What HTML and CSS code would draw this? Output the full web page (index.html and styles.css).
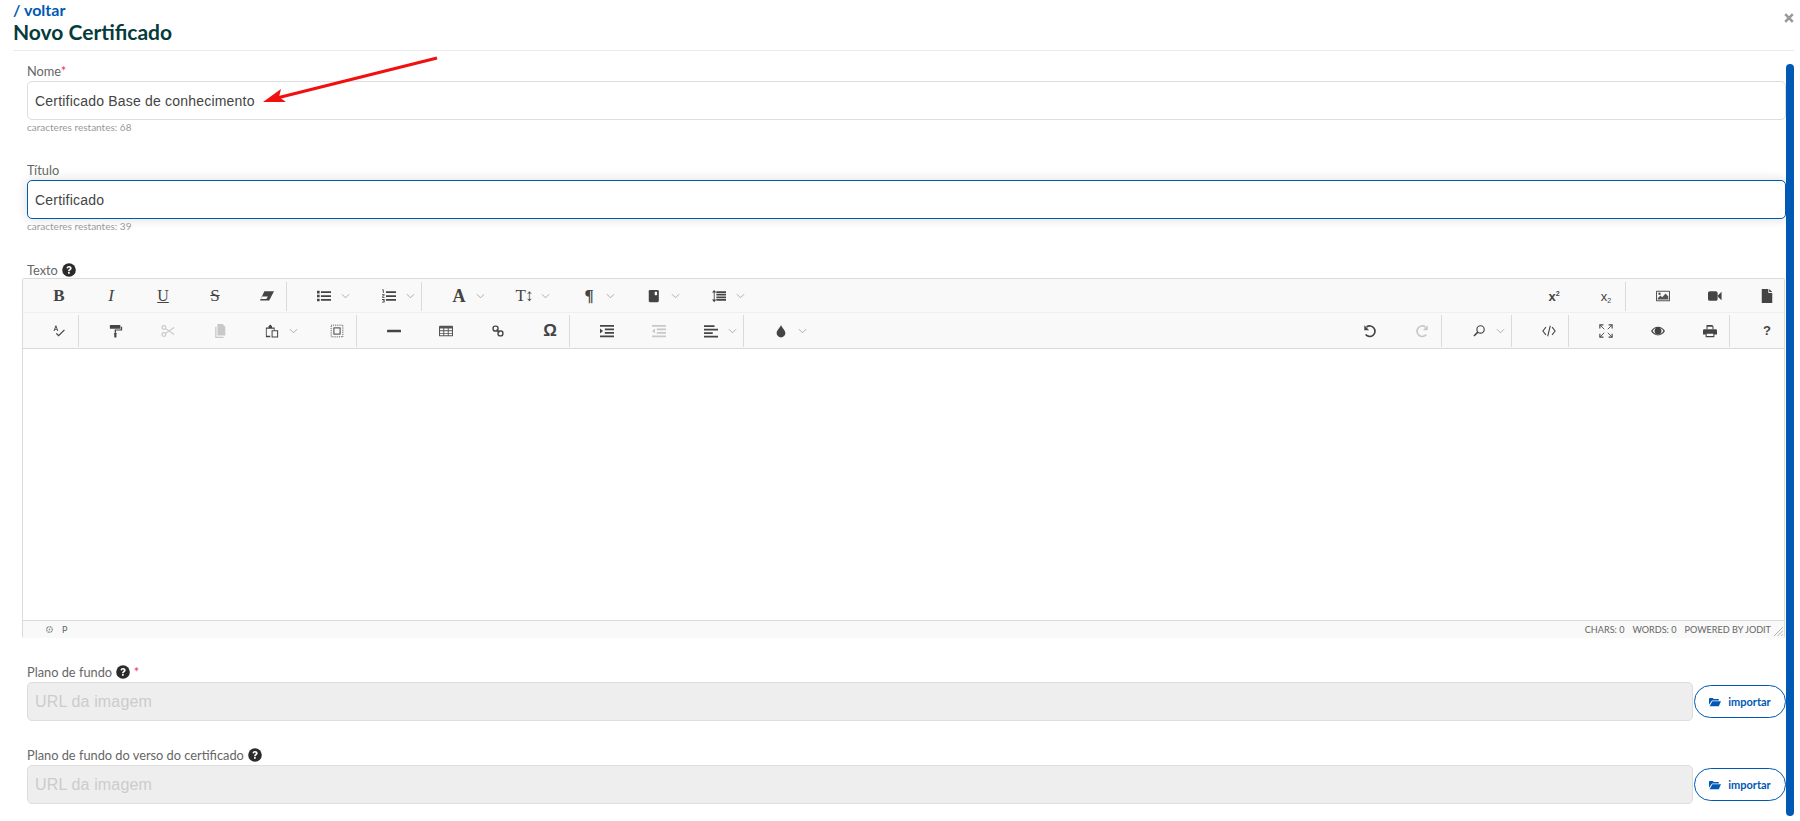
FILE: index.html

```html
<!DOCTYPE html>
<html lang="pt-BR">
<head>
<meta charset="UTF-8">
<title>Novo Certificado</title>
<link rel="stylesheet" href="styles.css">
</head>
<body>

<svg class="defs" aria-hidden="true">
  <symbol id="i-caret" viewBox="0 0 10 6"><path d="M1 1l4 4 4-4" fill="none" stroke="#a5a5a5" stroke-width="1"/></symbol>
  <symbol id="i-help" viewBox="0 0 16 16"><circle cx="8" cy="8" r="7.800" fill="#2b2b2b"/><path d="M5.200 6.100C5.300 4.400 6.500 3.400 8 3.400c1.700 0 3 1 3 2.600 0 1.300-.8 1.900-1.500 2.400-.5.300-.7.600-.7 1.100H6.900c0-1.200.4-1.700 1-2.100.6-.4 1-.7 1-1.300 0-.6-.4-1-1-1s-1 .4-1.100 1.100z" fill="#fff"/><rect x="6.900" y="10.300" width="1.900" height="2" fill="#fff"/></symbol>
  <symbol id="i-eraser" viewBox="0 0 16 16"><path d="M5 2.500h11L10.500 13H0z" fill="#444"/><path d="M2.500 8.500h6.500L7.200 11.500H.8z" fill="#fff"/></symbol>
  <symbol id="i-ul" viewBox="0 0 16 16"><path d="M0 2h3v3H0zM0 6.500h3v3H0zM0 11h3v3H0zM4.500 2.500H16v2H4.500zM4.500 7H16v2H4.500zM4.500 11.500H16v2H4.500z" fill="#444"/></symbol>
  <symbol id="i-ol" viewBox="0 0 16 16"><path d="M0 .5h2v4H1V1.500H0zM0 6h3v1L1 9h2v1H0V9l2-2H0zM0 11.500h3v4H0v-1h2v-.5H1v-1h1v-.500H0zM4.500 2.500H16v2H4.500zM4.500 7H16v2H4.500zM4.500 11.500H16v2H4.500z" fill="#444"/></symbol>
  <symbol id="i-book" viewBox="0 0 16 16"><path d="M3.500 1h8.500a1.500 1.500 0 0 1 1.500 1.500v11A1.500 1.500 0 0 1 12 15H3.500A1.500 1.500 0 0 1 2 13.500v-11A1.500 1.500 0 0 1 3.500 1z" fill="#444"/><rect x="8.800" y="3" width="2.700" height="4" rx=".5" fill="#fff"/></symbol>
  <symbol id="i-lines" viewBox="0 0 16 16"><path d="M5 2.500h11v2H5zM5 5.500h11v2H5zM5 8.500h11v2H5zM5 11.500h11v2H5zM2 4H0l2.500-3L5 4H3v8h2l-2.500 3L0 12h2z" fill="#444"/></symbol>
  <symbol id="i-image" viewBox="0 0 16 16"><path d="M1 2h14a1 1 0 0 1 1 1v10a1 1 0 0 1-1 1H1a1 1 0 0 1-1-1V3a1 1 0 0 1 1-1zm.2 1.200v9.600h13.600V3.200z" fill="#555"/><circle cx="4" cy="5.500" r="1.400" fill="#555"/><path d="M2 12V10.500L5 7.500 7 9.500 11 5l3 3.500V12z" fill="#555"/></symbol>
  <symbol id="i-video" viewBox="0 0 16 16"><rect x="0" y="2.500" width="11" height="11" rx="2.200" fill="#444"/><path d="M11.500 7L15.500 3.200V12.800L11.500 9z" fill="#444"/></symbol>
  <symbol id="i-file" viewBox="0 0 16 16"><path d="M2 0h7.500v4.500H14V16H2zM10.500 0L14 3.500h-3.500z" fill="#444"/></symbol>
  <symbol id="i-spell" viewBox="-1 -1 18 18"><path d="M3.500 1L1 8h1.300l.5-1.500h2.500L5.800 8H7L4.600 1zM3.200 5.400l.9-2.700.8 2.700z" fill="#444"/><path d="M4.500 11l3 3L15 6.500" fill="none" stroke="#444" stroke-width="1.600"/></symbol>
  <symbol id="i-roller" viewBox="0 0 16 16"><rect x="1" y="1" width="12" height="4.500" rx=".7" fill="#444"/><path d="M13.500 3H15v4.500H8V10H6.500V6.300H13.500z" fill="#444"/><rect x="6" y="10" width="2.500" height="5.500" rx=".5" fill="#444"/></symbol>
  <symbol id="i-cut" viewBox="0 0 16 16"><g fill="none" stroke="#c8c8c8" stroke-width="1.300"><circle cx="3.300" cy="4" r="2.200"/><circle cx="3.300" cy="12" r="2.200"/><path d="M5.200 5.300L15 12M5.200 10.700L15 4"/></g></symbol>
  <symbol id="i-copy" viewBox="0 0 16 16"><path d="M5 0h6l3 3v10H5z" fill="#c8c8c8"/><path d="M2.500 3H4v11.500h8V16H2.500z" fill="#c8c8c8"/></symbol>
  <symbol id="i-paste" viewBox="0 0 16 16"><path d="M1 4h3V2.500L6 .5l2 2V4h3v3h-1V5.300H2v8.200h4V15H1z" fill="#444"/><path d="M7.500 7H15v8.500H7.500zM8.700 8.200v6.100h5.100V8.200z" fill="#444"/></symbol>
  <symbol id="i-select" viewBox="-1 -1 18 18"><rect x=".5" y=".5" width="15" height="15" fill="none" stroke="#444" stroke-width="1.200" stroke-dasharray="1.200 1.200"/><rect x="4" y="4" width="8" height="8" fill="none" stroke="#444" stroke-width="1.300"/></symbol>
  <symbol id="i-hr" viewBox="0 0 16 16"><rect x="0" y="6.500" width="16" height="3" rx=".5" fill="#444"/></symbol>
  <symbol id="i-table" viewBox="0 0 16 16"><path d="M1 2h14a1 1 0 0 1 1 1v10a1 1 0 0 1-1 1H1a1 1 0 0 1-1-1V3a1 1 0 0 1 1-1z" fill="#555"/><path d="M1.200 5.200h3.700v2H1.200zM6 5.200h4v2H6zM11.100 5.200h3.700v2h-3.700zM1.200 8.200h3.700v2H1.200zM6 8.200h4v2H6zM11.100 8.200h3.700v2h-3.700zM1.200 11.200h3.700v1.700H1.200zM6 11.200h4v1.700H6zM11.100 11.200h3.700v1.700h-3.700z" fill="#fff"/></symbol>
  <symbol id="i-link" viewBox="-2 -2 20 20"><g fill="none" stroke="#444" stroke-width="2"><rect x="1" y="1" width="7" height="7" rx="3"/><rect x="8" y="8" width="7" height="7" rx="3"/><path d="M6 6l4 4"/></g></symbol>
  <symbol id="i-indent" viewBox="0 0 16 16"><path d="M0 1h16v2H0zM5.500 5H16v2H5.500zM5.500 9H16v2H5.500zM0 13h16v2H0zM0 5.200L3.500 8 0 10.800z" fill="#444"/></symbol>
  <symbol id="i-outdent" viewBox="0 0 16 16"><path d="M0 1h16v2H0zM5.500 5H16v2H5.500zM5.500 9H16v2H5.500zM0 13h16v2H0zM3.500 5.200L0 8l3.500 2.800z" fill="#c8c8c8"/></symbol>
  <symbol id="i-align" viewBox="0 0 16 16"><path d="M0 1.500h12v2H0zM0 5.500h16v2H0zM0 9.500h10v2H0zM0 13.500h16v2H0z" fill="#444"/></symbol>
  <symbol id="i-drop" viewBox="0 0 16 16"><path d="M8 1c1 3 5 6 5 9.300A5 5 0 0 1 3 10.300C3 7 7 4 8 1z" fill="#444"/></symbol>
  <symbol id="i-undo" viewBox="0 0 16 16"><path d="M4 3.500A6 6 0 1 1 3 12" fill="none" stroke="#444" stroke-width="1.900"/><path d="M1.500 1.500v5.500H7z" fill="#444"/></symbol>
  <symbol id="i-redo" viewBox="0 0 16 16"><path d="M12 3.500A6 6 0 1 0 13 12" fill="none" stroke="#c8c8c8" stroke-width="1.900"/><path d="M14.500 1.500v5.500H9z" fill="#c8c8c8"/></symbol>
  <symbol id="i-search" viewBox="-1 -1 18 18"><circle cx="10" cy="6" r="4.700" fill="none" stroke="#444" stroke-width="1.500"/><path d="M6.500 9.500L1.500 14.500" stroke="#444" stroke-width="2"/></symbol>
  <symbol id="i-code" viewBox="0 0 16 16"><path d="M4.500 3.500L1 8l3.500 4.500M11.500 3.500L15 8l-3.500 4.500M9.500 2L6.500 14" fill="none" stroke="#444" stroke-width="1.200"/></symbol>
  <symbol id="i-full" viewBox="0 0 16 16"><path d="M1 5V1h4M15 5V1h-4M1 11v4h4M15 11v4h-4" fill="none" stroke="#444" stroke-width="1.300"/><path d="M1.500 1.500L6 6M14.500 1.500L10 6M1.500 14.500L6 10M14.500 14.500L10 10" stroke="#444"/></symbol>
  <symbol id="i-eye" viewBox="0 0 16 16"><path d="M0 8c2-3.500 5-5 8-5s6 1.500 8 5c-2 3.500-5 5-8 5s-6-1.500-8-5z" fill="#444"/><path d="M1.800 8C3.300 5.700 5 4.700 6 4.400a4 4 0 1 0 4 0c1 .3 2.700 1.300 4.200 3.600-1.700 2.400-4 3.700-6.200 3.700S3.500 10.400 1.800 8z" fill="#f9f9f9"/><circle cx="8" cy="7.500" r="3" fill="#444"/></symbol>
  <symbol id="i-print" viewBox="0 0 16 16"><path d="M4 1h6.500L12 2.500V6h-1.200V3H5.200v3H4z" fill="#444"/><path d="M1.500 6h13A1.500 1.500 0 0 1 16 7.500V12h-3v3H3v-3H0V7.500A1.500 1.500 0 0 1 1.500 6zm2.700 5v2.800h7.600V11z" fill="#444"/></symbol>
  <symbol id="i-gear" viewBox="0 0 16 16"><circle cx="8" cy="8" r="5" fill="none" stroke="#888" stroke-width="2.500" stroke-dasharray="2 1"/><circle cx="8" cy="8" r="1.500" fill="#888"/></symbol>
  <symbol id="i-folder" viewBox="0 0 16 16"><path d="M0 3.500A1 1 0 0 1 1 2.500h4l1.200 1.500h6a1 1 0 0 1 1 1V6H4L0 11.500z" fill="#0059b3"/><path d="M4.500 7H16l-3 6.500H.8z" fill="#0059b3"/></symbol>
  <symbol id="i-close" viewBox="0 0 10 10"><path d="M1.200 1.200l7.600 7.600M8.800 1.200L1.200 8.800" stroke="#999" stroke-width="2.600"/></symbol>
</svg>

<header class="top">
  <a class="back-link" href="#">/ voltar</a>
  <h1 class="page-title">Novo Certificado</h1>
  <svg class="close-btn"><use href="#i-close"/></svg>
</header>

<svg class="arrow" width="190" height="56" viewBox="0 0 190 56">
  <path d="M176 2L16 42" stroke="#f01010" stroke-width="3"/>
  <path d="M2 46L20 33 18 41 25 46z" fill="#f01010"/>
</svg>

<div class="content">
  <main class="form">

    <div class="field">
      <label class="field-label">Nome<span class="req">*</span></label>
      <input class="text-input" type="text" value="Certificado Base de conhecimento">
      <small class="hint">caracteres restantes: 68</small>
    </div>

    <div class="field">
      <label class="field-label">Título</label>
      <input class="text-input focused" type="text" value="Certificado">
      <small class="hint">caracteres restantes: 39</small>
    </div>

    <div class="field-editor">
      <label class="field-label">Texto <svg class="help"><use href="#i-help"/></svg></label>
      <div class="editor">
        <div class="toolbar-row">
          <div class="group">
            <span class="tool glyph g-b">B</span>
            <span class="tool glyph g-i">I</span>
            <span class="tool glyph g-u">U</span>
            <span class="tool glyph g-s">S</span>
            <span class="tool"><svg class="ico"><use href="#i-eraser"/></svg></span>
          </div>
          <div class="group">
            <span class="tool has-caret"><svg class="ico"><use href="#i-ul"/></svg><svg class="caret"><use href="#i-caret"/></svg></span>
            <span class="tool has-caret"><svg class="ico"><use href="#i-ol"/></svg><svg class="caret"><use href="#i-caret"/></svg></span>
          </div>
          <div class="group">
            <span class="tool has-caret glyph g-a">A<svg class="caret"><use href="#i-caret"/></svg></span>
            <span class="tool has-caret glyph g-t">T↕<svg class="caret"><use href="#i-caret"/></svg></span>
            <span class="tool has-caret glyph g-p">¶<svg class="caret"><use href="#i-caret"/></svg></span>
            <span class="tool has-caret"><svg class="ico"><use href="#i-book"/></svg><svg class="caret"><use href="#i-caret"/></svg></span>
            <span class="tool has-caret"><svg class="ico"><use href="#i-lines"/></svg><svg class="caret"><use href="#i-caret"/></svg></span>
          </div>
          <div class="group push">
            <span class="tool glyph g-x"><span>x<sup>2</sup></span></span>
            <span class="tool glyph g-x2"><span>x<sub>2</sub></span></span>
          </div>
          <div class="group">
            <span class="tool"><svg class="ico"><use href="#i-image"/></svg></span>
            <span class="tool"><svg class="ico"><use href="#i-video"/></svg></span>
            <span class="tool"><svg class="ico"><use href="#i-file"/></svg></span>
          </div>
        </div>
        <div class="toolbar-row row-two">
          <div class="group">
            <span class="tool"><svg class="ico"><use href="#i-spell"/></svg></span>
          </div>
          <div class="group">
            <span class="tool"><svg class="ico"><use href="#i-roller"/></svg></span>
            <span class="tool"><svg class="ico"><use href="#i-cut"/></svg></span>
            <span class="tool"><svg class="ico"><use href="#i-copy"/></svg></span>
            <span class="tool has-caret"><svg class="ico"><use href="#i-paste"/></svg><svg class="caret"><use href="#i-caret"/></svg></span>
            <span class="tool"><svg class="ico"><use href="#i-select"/></svg></span>
          </div>
          <div class="group">
            <span class="tool"><svg class="ico"><use href="#i-hr"/></svg></span>
            <span class="tool"><svg class="ico"><use href="#i-table"/></svg></span>
            <span class="tool"><svg class="ico"><use href="#i-link"/></svg></span>
            <span class="tool glyph g-o">Ω</span>
          </div>
          <div class="group">
            <span class="tool"><svg class="ico"><use href="#i-indent"/></svg></span>
            <span class="tool"><svg class="ico"><use href="#i-outdent"/></svg></span>
            <span class="tool has-caret"><svg class="ico"><use href="#i-align"/></svg><svg class="caret"><use href="#i-caret"/></svg></span>
          </div>
          <div class="group">
            <span class="tool has-caret"><svg class="ico"><use href="#i-drop"/></svg><svg class="caret"><use href="#i-caret"/></svg></span>
          </div>
          <div class="group push">
            <span class="tool"><svg class="ico"><use href="#i-undo"/></svg></span>
            <span class="tool"><svg class="ico"><use href="#i-redo"/></svg></span>
          </div>
          <div class="group">
            <span class="tool has-caret"><svg class="ico"><use href="#i-search"/></svg><svg class="caret"><use href="#i-caret"/></svg></span>
          </div>
          <div class="group">
            <span class="tool"><svg class="ico"><use href="#i-code"/></svg></span>
          </div>
          <div class="group">
            <span class="tool"><svg class="ico"><use href="#i-full"/></svg></span>
            <span class="tool"><svg class="ico"><use href="#i-eye"/></svg></span>
            <span class="tool"><svg class="ico"><use href="#i-print"/></svg></span>
          </div>
          <div class="group">
            <span class="tool glyph g-q">?</span>
          </div>
        </div>
        <div class="editor-body"></div>
        <div class="status">
          <svg class="status-gear"><use href="#i-gear"/></svg>
          <span class="status-tag">P</span>
          <span class="status-right">CHARS: 0</span>
          <span class="status-item">WORDS: 0</span>
          <span class="status-item">POWERED BY JODIT</span>
          <svg class="resize" viewBox="0 0 10 10"><path d="M0 10L10 0M4 10l6-6M8 10l2-2" stroke="#aaa"/></svg>
        </div>
      </div>
    </div>

    <div class="field-upload">
      <label class="field-label">Plano de fundo <svg class="help"><use href="#i-help"/></svg> <span class="req">*</span></label>
      <div class="upload-row">
        <input class="text-input locked" type="text" placeholder="URL da imagem" disabled>
        <button class="import-btn" type="button"><svg class="folder"><use href="#i-folder"/></svg>importar</button>
      </div>
    </div>

    <div class="field-upload">
      <label class="field-label">Plano de fundo do verso do certificado <svg class="help"><use href="#i-help"/></svg></label>
      <div class="upload-row">
        <input class="text-input locked" type="text" placeholder="URL da imagem" disabled>
        <button class="import-btn" type="button"><svg class="folder"><use href="#i-folder"/></svg>importar</button>
      </div>
    </div>

  </main>
  <div class="scrollbar"></div>
</div>

</body>
</html>
```

FILE: styles.css

```css
html, body {
  margin: 0;
  height: 100%;
  overflow: hidden;
  background: #fff;
}
body {
  position: relative;
  font-family: "Lato", "Noto Sans", sans-serif;
  color: #666;
}
.defs {
  display: none;
}

/* HEADER */
.top {
  position: relative;
  margin: 0 6px 0 13px;
  height: 50px;
  border-bottom: 1px solid #eaeaea;
}
.back-link {
  display: block;
  padding-top: 1px;
  padding-bottom: 1px;
  font-size: 16px;
  line-height: 17px;
  font-weight: 700;
  color: #0059b3;
  text-decoration: none;
}
.page-title {
  margin: 0;
  font-size: 21px;
  line-height: 26px;
  font-weight: 700;
  color: #063b3b;
}
.close-btn {
  position: absolute;
  right: 0;
  top: 13px;
  width: 10px;
  height: 10px;
}
.arrow {
  position: absolute;
  left: 261px;
  top: 56px;
}

/* FORM */
.content {
  display: flex;
  padding-right: 6px;
}
.form {
  flex: 1;
  min-width: 0;
  padding: 13px 0 0 27px;
}
.scrollbar {
  width: 8px;
  height: 752px;
  margin-top: 13px;
  border-radius: 4px;
  background: #0059b3;
}
.field {
  height: 99px;
}
.field-editor {
  height: 402px;
}
.field-upload {
  height: 83px;
}
.field-label {
  display: block;
  height: 17px;
  font-size: 12.8px;
  line-height: 15px;
  color: #666;
}
.field-editor .field-label {
  height: 16px;
  line-height: 16px;
}
.field-upload .field-label {
  height: 18px;
  line-height: 16px;
}
.req {
  color: #f0315a;
}
.help {
  width: 14px;
  height: 14px;
  vertical-align: -2px;
  margin-left: 1px;
}
.text-input {
  display: block;
  box-sizing: border-box;
  width: 100%;
  height: 39px;
  padding: 0 7px;
  border: 1px solid #ddd;
  border-radius: 5px;
  outline: none;
  font-family: "Liberation Sans", Arial, sans-serif;
  font-size: 14px;
  letter-spacing: .2px;
  color: #444;
  background: #fff;
}
.text-input.focused {
  border-color: #0059b3;
  box-shadow: 0 0 12px rgba(0, 0, 0, .14);
}
.text-input.locked {
  flex: 1;
  width: auto;
  min-width: 0;
  background: #eee;
  font-size: 16px;
  letter-spacing: .15px;
}
.text-input.locked::placeholder {
  color: #ccc;
  opacity: 1;
}
.hint {
  display: block;
  margin-top: 1px;
  font-size: 10px;
  line-height: 13px;
  color: #999;
}

/* JODIT EDITOR */
.editor {
  box-sizing: border-box;
  height: 360px;
  margin-left: -5px;
  margin-right: 1px;
  display: flex;
  flex-direction: column;
  border: 1px solid #dadada;
  border-bottom: 0;
  border-radius: 2px;
  overflow: hidden;
}
.toolbar-row {
  display: flex;
  flex: none;
  box-sizing: border-box;
  height: 34px;
  padding: 1px 0 0 3px;
  background: #f9f9f9;
  border-bottom: 1px solid #efefef;
}
.row-two {
  height: 36px;
  padding-top: 0;
  border-bottom: 1px solid #dadada;
}
.group {
  display: flex;
  align-items: center;
  position: relative;
  padding-left: 5px;
}
.group:last-child {
  margin-right: -2px;
}
.group::before {
  content: '';
  position: absolute;
  left: 0;
  top: 2px;
  bottom: 1px;
  width: 1px;
  background: #dadada;
}
.group:first-child {
  padding-left: 0;
}
.group:first-child::before,
.group.push::before {
  display: none;
}
.group.push {
  margin-left: auto;
}
.tool {
  position: relative;
  display: flex;
  align-items: center;
  justify-content: center;
  flex: none;
  width: 38px;
  height: 30px;
  margin-left: 14px;
  color: #444;
}
.tool.has-caret {
  margin-right: 13px;
}
.ico {
  width: 14px;
  height: 14px;
}
.caret {
  position: absolute;
  left: 36px;
  top: 12px;
  width: 9px;
  height: 6px;
}
.glyph {
  font-family: "Liberation Serif", serif;
  font-size: 17px;
}
.g-b {
  font-weight: 700;
}
.g-i {
  font-style: italic;
}
.g-u {
  font-size: 16px;
  text-decoration: underline;
}
.g-s {
  text-decoration: line-through;
}
.g-a {
  font-weight: 700;
  font-size: 18px;
}
.g-t {
  font-size: 17px;
  letter-spacing: -1px;
}
.g-p {
  font-weight: 700;
}
.g-o {
  font-family: "Liberation Sans", sans-serif;
  font-size: 17px;
  font-weight: 700;
}
.g-q {
  font-family: "Liberation Sans", sans-serif;
  font-size: 13px;
  font-weight: 700;
}
.g-x, .g-x2 {
  font-family: "Liberation Sans", sans-serif;
  font-size: 13px;
  font-weight: 700;
}
.g-x2 {
  font-weight: 400;
}
.g-x sup {
  font-size: 7px;
  line-height: 0;
  vertical-align: 5px;
}
.g-x2 sub {
  font-size: 7px;
  line-height: 0;
  vertical-align: -2px;
}
.editor-body {
  flex: 1;
  background: #fff;
}
.status {
  display: flex;
  align-items: center;
  flex: none;
  height: 17px;
  padding-left: 22px;
  background: #f9f9f9;
  border-top: 1px solid #dadada;
  font-size: 9.1px;
  color: #666;
}
.status-gear {
  width: 9px;
  height: 9px;
}
.status-tag {
  margin-left: 8px;
}
.status-right {
  margin-left: auto;
}
.status-item {
  margin-left: 8px;
}
.resize {
  width: 9px;
  height: 9px;
  margin: 3px 1px 0 3px;
}

/* UPLOAD */
.upload-row {
  display: flex;
  align-items: center;
}
.import-btn {
  flex: none;
  display: flex;
  align-items: center;
  justify-content: center;
  box-sizing: border-box;
  width: 92px;
  height: 33px;
  margin-left: 1px;
  border: 1.5px solid #0059b3;
  border-radius: 17px;
  background: #fff;
  font-family: "Lato", sans-serif;
  font-size: 11px;
  font-weight: 700;
  color: #0059b3;
}
.folder {
  width: 12px;
  height: 12px;
  margin-right: 7px;
}
```
